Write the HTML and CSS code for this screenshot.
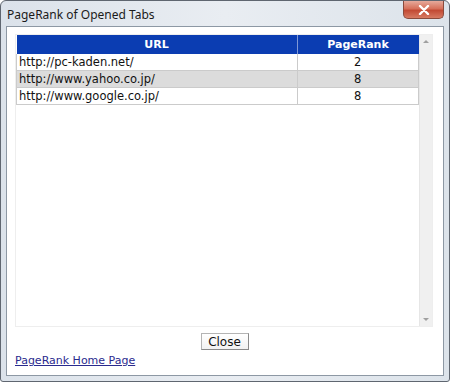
FILE: index.html
```html
<!DOCTYPE html>
<html lang="en">
<head>
    <meta charset="UTF-8">
    <title>PageRank of Opened Tabs</title>
    <link rel="stylesheet" href="styles.css">
</head>
<body>
    <div class="window">
        <div class="titlebar">
            <span class="title">PageRank of Opened Tabs</span>
            <div class="close-x">
                <svg width="12" height="10" viewBox="0 0 12 10">
                    <path d="M2 1 L10 9 M10 1 L2 9" stroke="#fff" stroke-width="2.4" stroke-linecap="round"/>
                </svg>
            </div>
        </div>
        <div class="client">
            <div class="scroll-box">
                <div class="list">
                    <table class="ranks">
                        <thead>
                            <tr><th class="col-url">URL</th><th class="col-rank">PageRank</th></tr>
                        </thead>
                        <tbody>
                            <tr><td>http://pc-kaden.net/</td><td class="rank">2</td></tr>
                            <tr class="alt"><td>http://www.yahoo.co.jp/</td><td class="rank">8</td></tr>
                            <tr><td>http://www.google.co.jp/</td><td class="rank">8</td></tr>
                        </tbody>
                    </table>
                </div>
                <div class="scrollbar">
                    <span class="arrow up"></span>
                    <span class="arrow down"></span>
                </div>
            </div>
            <div class="actions">
                <button class="btn">Close</button>
            </div>
            <a class="home-link" href="#">PageRank Home Page</a>
        </div>
    </div>
</body>
</html>
```

FILE: styles.css
```css
body {
    margin: 0;
    background: #fff;
    font-family: "DejaVu Sans", Verdana, sans-serif;
}
.window {
    width: 450px;
    height: 382px;
    box-sizing: border-box;
    border: 1px solid #5f6670;
    border-radius: 6px 6px 3px 3px;
    background: linear-gradient(to right, #dbe2ea, #e9edf2 50%, #dce3ea);
    padding: 0 5px 5px;
    display: flex;
    flex-direction: column;
}
.titlebar {
    height: 25px;
    display: flex;
    align-items: center;
    justify-content: space-between;
    position: relative;
}
.title {
    font-family: "Noto Sans", sans-serif;
    font-size: 12px;
    color: #1b1b1b;
    padding-left: 1px;
    margin-top: 1px;
}
.close-x {
    width: 41px;
    height: 18px;
    margin-top: -7px;
    box-sizing: border-box;
    border: 1px solid #8a4a3c;
    border-top: none;
    border-radius: 0 0 5px 5px;
    background: linear-gradient(#e6aa9b, #d6705a 45%, #c24a34 55%, #d77a62);
    display: flex;
    align-items: center;
    justify-content: center;
}
.client {
    flex: 1;
    background: #fff;
    border: 1px solid #8d98a4;
    padding: 7px 10px 0 8px;
    display: flex;
    flex-direction: column;
}
.scroll-box {
    height: 293px;
    display: flex;
    border: 1px solid #eeeeee;
    box-sizing: border-box;
}
.list {
    flex: 1;
}
.ranks {
    width: 100%;
    border-collapse: collapse;
    font-size: 11.5px;
}
.ranks th {
    background: #0b3db2;
    color: #fff;
    font-size: 11px;
    font-weight: bold;
    height: 19px;
    padding: 0;
    border-right: 1px solid #7f98d6;
}
.ranks th:last-child {
    border-right: none;
}
.col-url {
    width: 280px;
}
.ranks td {
    height: 16px;
    padding: 0 0 0 2px;
    color: #111;
    border: 1px solid #cbcbcb;
    border-top: none;
}
.ranks .rank {
    text-align: center;
    padding: 0;
}
.ranks tr.alt td {
    background: #dcdcdc;
}
.scrollbar {
    width: 12px;
    background: #f0f0f0;
    border-left: 1px solid #e6e6e6;
    display: flex;
    flex-direction: column;
    justify-content: space-between;
    align-items: center;
    padding: 5px 0;
}
.arrow {
    width: 0;
    height: 0;
    border-left: 3px solid transparent;
    border-right: 3px solid transparent;
}
.arrow.up {
    border-bottom: 3px solid #a0a0a0;
}
.arrow.down {
    border-top: 3px solid #a0a0a0;
}
.actions {
    display: flex;
    justify-content: center;
    margin-top: 6px;
}
.btn {
    font-family: "DejaVu Sans", Verdana, sans-serif;
    font-size: 12px;
    color: #111;
    height: 17px;
    width: 48px;
    margin-left: 1px;
    padding: 0;
    background: linear-gradient(#ffffff, #f2f2f2);
    border: 1px solid #b4b4b4;
    border-right-color: #8a8a8a;
    border-bottom-color: #8a8a8a;
    border-radius: 0;
    line-height: 14px;
}
.home-link {
    align-self: flex-start;
    margin-top: 4px;
    font-size: 11px;
    color: #2a2a8e;
    text-decoration: underline;
}
```
